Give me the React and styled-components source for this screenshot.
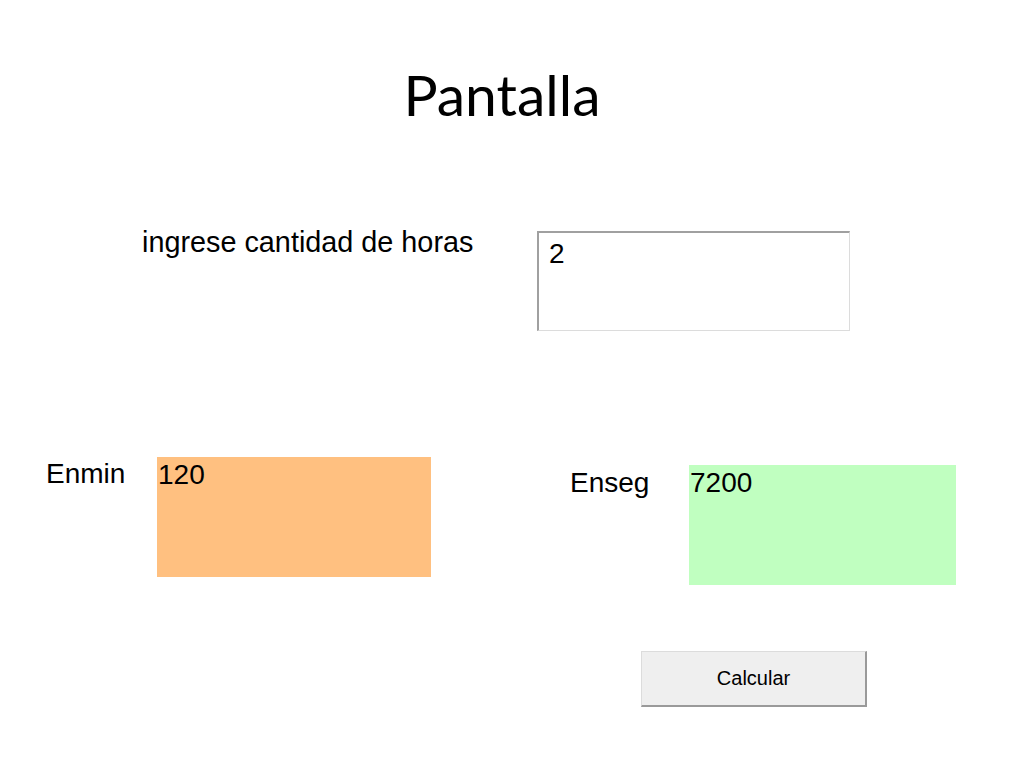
import React from "react";
import styled, { createGlobalStyle } from "styled-components";

const GlobalStyle = createGlobalStyle`
  html, body { margin: 0; padding: 0; background: #ffffff; }
  body { font-family: "Liberation Sans", Arial, sans-serif; color: #000; }
`;

const Page = styled.div`
  width: 1024px;
  height: 768px;
  overflow: hidden;
  display: flex;
  flex-direction: column;
  background: #ffffff;
`;

const Title = styled.h1`
  margin: 60px 0 0 0;
  padding-right: 20px;
  font-family: Lato, "Open Sans", sans-serif;
  font-weight: 400;
  font-size: 57px;
  line-height: 68px;
  text-align: center;
`;

const FormRow = styled.div`
  display: flex;
  align-items: flex-start;
  padding-left: ${(p) => p.$left}px;
  margin-top: ${(p) => p.$top}px;
`;

const Label = styled.span`
  width: ${(p) => p.$width}px;
  flex: none;
  font-size: ${(p) => p.$size || 28}px;
  line-height: 32px;
  margin-top: ${(p) => p.$offset || 0}px;
`;

const InputBox = styled.div`
  box-sizing: border-box;
  width: 313px;
  height: 100px;
  margin-top: 5px;
  padding: 5px 0 0 10px;
  border-top: 2px solid #a0a0a0;
  border-left: 2px solid #a0a0a0;
  border-right: 1px solid #dcdcdc;
  border-bottom: 1px solid #dcdcdc;
  background: #ffffff;
  font-size: 28px;
  line-height: 32px;
`;

const ResultGroup = styled.div`
  display: flex;
  align-items: flex-start;
  margin-top: ${(p) => p.$offset || 0}px;
  margin-left: ${(p) => p.$gap || 0}px;
`;

const ResultBox = styled.div`
  box-sizing: border-box;
  width: ${(p) => p.$width}px;
  height: 120px;
  padding: 2px 0 0 1px;
  background: ${(p) => p.$color};
  font-size: 28px;
  line-height: 32px;
`;

const ButtonRow = styled.div`
  display: flex;
  padding-left: 641px;
  margin-top: 66px;
`;

const Button = styled.button`
  box-sizing: border-box;
  width: 226px;
  height: 56px;
  padding: 0;
  background: #efefef;
  border-top: 1px solid #dcdcdc;
  border-left: 1px solid #dcdcdc;
  border-right: 2px solid #9a9a9a;
  border-bottom: 2px solid #9a9a9a;
  border-radius: 0;
  font-family: "Liberation Sans", Arial, sans-serif;
  font-size: 20px;
  color: #000;
  cursor: pointer;
`;

export default function App() {
  return (
    <Page>
      <GlobalStyle />
      <Title>Pantalla</Title>
      <FormRow $left={142} $top={98}>
        <Label $width={395} $size={28.8}>ingrese cantidad de horas</Label>
        <InputBox>2</InputBox>
      </FormRow>
      <FormRow $left={46} $top={126}>
        <ResultGroup>
          <Label $width={111} $offset={1}>Enmin</Label>
          <ResultBox $width={274} $color="#ffc080">120</ResultBox>
        </ResultGroup>
        <ResultGroup $offset={8} $gap={139}>
          <Label $width={119} $offset={2}>Enseg</Label>
          <ResultBox $width={267} $color="#c0ffc0">7200</ResultBox>
        </ResultGroup>
      </FormRow>
      <ButtonRow>
        <Button>Calcular</Button>
      </ButtonRow>
    </Page>
  );
}
